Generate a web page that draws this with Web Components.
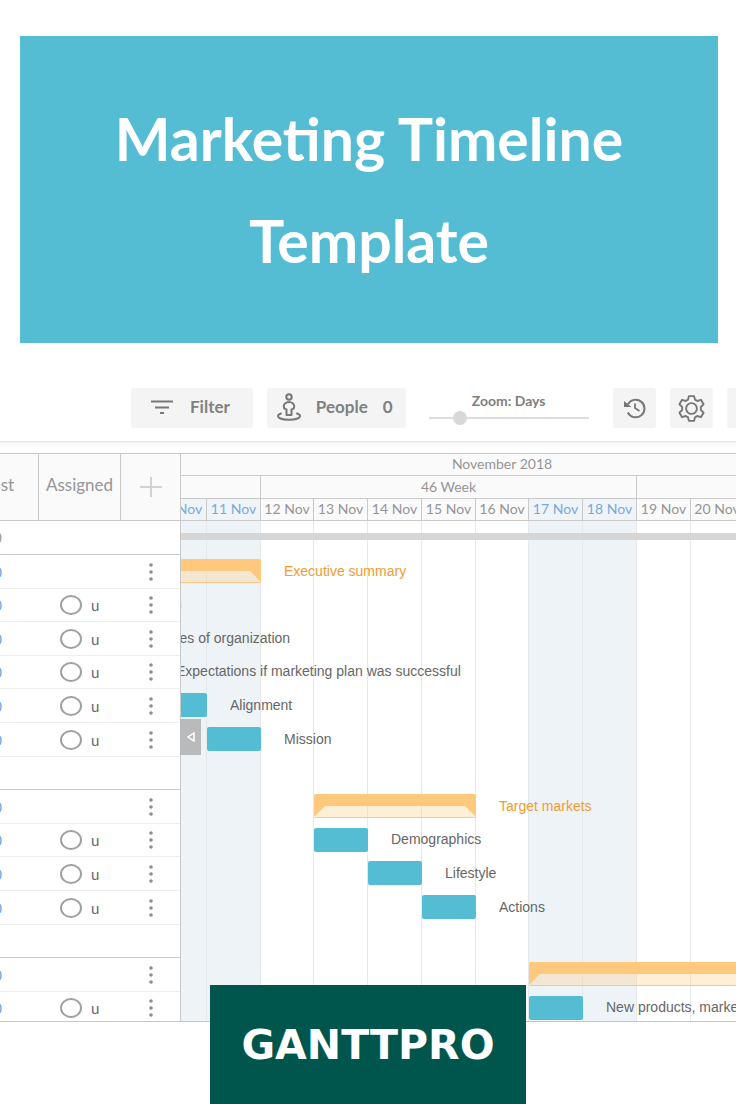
<!DOCTYPE html>
<html lang="en">
<head>
<meta charset="utf-8">
<meta name="viewport" content="width=device-width, initial-scale=1">
<title>Marketing Timeline Template</title>
<style>
    body {
        margin: 0;
        background: #fff;
        color: #858585;
        font-family: Lato, "Liberation Sans", sans-serif;
        overflow-x: hidden;
    }
    main {
        display: flex;
        flex-direction: column;
    }
</style>
</head>
<body>
<main>
    <title-banner>Marketing Timeline Template</title-banner>
    <tool-bar>
        <tool-button label="Filter" icon="filter"></tool-button>
        <tool-button label="People" icon="people" count="0"></tool-button>
        <zoom-slider></zoom-slider>
        <tool-button icon="history"></tool-button>
        <tool-button icon="settings"></tool-button>
        <tool-button></tool-button>
    </tool-bar>
    <gantt-project>
        <task-table slot="table"></task-table>
        <gantt-chart slot="chart"></gantt-chart>
    </gantt-project>
    <brand-badge>GANTTPRO</brand-badge>
</main>

<script>
function attach(el, html) {
    const root = el.attachShadow({mode: 'open'});
    const template = document.createElement('template');
    template.innerHTML = html;
    root.appendChild(template.content.cloneNode(true));
    return root;
}

class TitleBanner extends HTMLElement {
    constructor() {
        super();
        attach(this, `
            <style>
                :host {
                    display: block;
                    margin: 36px 18px 0 20px;
                    padding: 52px 80px 51px;
                    background: #54bdd4;
                    color: #fff;
                }
                h1 {
                    margin: 0;
                    font-size: 59px;
                    line-height: 102px;
                    font-weight: 700;
                    text-align: center;
                }
            </style>
            <h1><slot></slot></h1>`);
    }
}

class ToolBar extends HTMLElement {
    constructor() {
        super();
        attach(this, `
            <style>
                :host {
                    display: flex;
                    gap: 14px;
                    padding: 45px 0 13px 131px;
                    overflow: hidden;
                    border-bottom: 1px solid #e4e4e4;
                }
            </style>
            <slot></slot>`);
    }
}

const ICONS = {
    filter: `<svg width="22" height="14" viewBox="0 0 22 14" fill="none" stroke="#777" stroke-width="2">
        <path d="M0 1.5h22M4 7.5h14M9 13h4"/></svg>`,
    people: `<svg width="24" height="28" viewBox="0 0 24 28" fill="none" stroke="#777" stroke-width="2" stroke-linecap="round" stroke-linejoin="round">
        <circle cx="12" cy="4" r="2.7"/>
        <path d="M9.500 22v-5.500c-2.200-.3-2.700-1.500-2.700-3 0-2.500 2.200-4.500 5.200-4.500s5.200 2 5.200 4.500c0 1.500-.5 2.700-2.700 3V22z"/>
        <path d="M4 20.500c-1.800.6-3 1.500-3 2.500 0 2.200 5 3.700 11 3.700s11-1.500 11-3.700c0-1-1.200-1.900-3-2.500"/></svg>`,
    history: `<svg width="23" height="22" viewBox="0 0 23 22" fill="none" stroke="#777" stroke-width="2">
        <path d="M5 7.200A8.800 8.800 0 1 1 4.800 15.500"/>
        <path d="M1 4l7.500 6H1z" fill="#777" stroke="none"/>
        <path d="M12 6.500V11l4.500 3" stroke-width="1.800"/></svg>`,
    settings: `<svg width="27" height="27" viewBox="1 1 24 24" fill="none" stroke="#777" stroke-width="1.700" stroke-linejoin="round">
        <path d="M10.700 2h4.600l.8 3.200 2 1.100 3.300-1 2.300 4-2.400 2.400v2.600l2.400 2.400-2.300 4-3.300-1-2 1.100-.8 3.200h-4.600l-.8-3.200-2-1.100-3.300 1-2.300-4 2.400-2.400v-2.600L2.300 9.300l2.300-4 3.300 1 2-1.100z"/>
        <circle cx="13" cy="13" r="4.800"/></svg>`
};

class ToolButton extends HTMLElement {
    constructor() {
        super();
        this.root = attach(this, `
            <style>
                :host {
                    display: block;
                    flex: none;
                }
                button {
                    display: flex;
                    align-items: center;
                    justify-content: center;
                    min-width: 43px;
                    height: 40px;
                    padding: 0 8px;
                    border: 0;
                    border-radius: 3px;
                    background: #f4f4f4;
                    color: #808080;
                    font: 700 17px/20px Lato, sans-serif;
                }
                button.wide {
                    gap: 17px;
                    padding: 0 23px 2px 20px;
                }
                button.counted {
                    gap: 15px;
                    padding: 0 13px 2px 10px;
                }
            </style>
            <button type="button"></button>`);
    }

    connectedCallback() {
        const button = this.root.querySelector('button');
        const label = this.getAttribute('label');
        const icon = this.getAttribute('icon');
        const count = this.getAttribute('count');
        let html = ICONS[icon] || '';
        if (label) {
            html += `<span>${label}</span>`;
            button.className = 'wide';
        } else {
            button.setAttribute('aria-label', icon || 'more');
        }
        if (count !== null) {
            html += `<span>${count}</span>`;
            button.className = 'counted';
        }
        button.innerHTML = html;
    }
}

class ZoomSlider extends HTMLElement {
    constructor() {
        super();
        attach(this, `
            <style>
                :host {
                    display: flex;
                    flex: none;
                    flex-direction: column;
                    align-items: center;
                    width: 160px;
                    margin: 4px 10px 0 9px;
                }
                label {
                    color: #808080;
                    font-size: 14px;
                    line-height: 18px;
                    font-weight: 700;
                }
                input {
                    -webkit-appearance: none;
                    appearance: none;
                    width: 160px;
                    height: 16px;
                    margin: 0;
                    background: linear-gradient(#dcdcdc, #dcdcdc) center / 100% 2px no-repeat;
                }
                input::-webkit-slider-thumb {
                    -webkit-appearance: none;
                    width: 14px;
                    height: 14px;
                    border-radius: 50%;
                    background: #d8d8d8;
                }
            </style>
            <label for="zoom">Zoom: Days</label>
            <input id="zoom" type="range" min="0" max="100" value="17">`);
    }
}

class GanttProject extends HTMLElement {
    constructor() {
        super();
        attach(this, `
            <style>
                :host {
                    display: grid;
                    grid-template-columns: 180px minmax(0, 1fr);
                    position: relative;
                    height: 568px;
                    padding-top: 11px;
                    overflow: hidden;
                    background: linear-gradient(#f5f5f5, #fff 6px);
                    border-bottom: 1px solid #c4c8cb;
                }
                ::slotted(*) {
                    border-top: 1px solid #c9c9c9;
                }
                /* hides the table to the left of the chart */
                .collapse {
                    position: absolute;
                    left: 180px;
                    top: 277px;
                    width: 21px;
                    height: 36px;
                    padding: 0;
                    border: 0;
                    background: #b8babb;
                }
                svg { display: block; margin: 0 auto; }
            </style>
            <slot name="table"></slot>
            <slot name="chart"></slot>
            <button class="collapse" type="button" aria-label="Collapse table">
                <svg width="8" height="10" viewBox="0 0 8 10" fill="none" stroke="#fff" stroke-width="1.500"><path d="M7 1v8L1 5z"/></svg>
            </button>`);
    }
}

// g = group row, t = task row, e = empty row
const ROWS = ['g', 't', 't', 't', 't', 't', 'e', 'g', 't', 't', 't', 'e', 'g', 't'];

class TaskTable extends HTMLElement {
    constructor() {
        super();
        const menu = `<button type="button" aria-label="Task menu">
            <svg width="4" height="18" viewBox="0 0 4 18" fill="#8c8c8c"><circle cx="2" cy="2" r="1.800"/><circle cx="2" cy="9" r="1.800"/><circle cx="2" cy="16" r="1.800"/></svg></button>`;
        const body = ROWS.map((kind, i) => {
            const last = ROWS[i + 1] === 'g' ? ' class="end"' : '';
            if (kind === 'e') return `<tr${last}><td></td><td></td><td></td></tr>`;
            const person = kind === 't' ? '<span class="person"><i></i>u</span>' : '';
            return `<tr${last}><td class="cost">0</td><td>${person}</td><td>${menu}</td></tr>`;
        }).join('');
        attach(this, `
            <style>
                :host {
                    display: flex;
                    justify-content: flex-end;
                    overflow: hidden;
                }
                table {
                    flex: none;
                    width: 224px;
                    table-layout: fixed;
                    border-collapse: separate;
                    border-spacing: 0;
                }
                th, td {
                    box-sizing: border-box;
                    padding: 0;
                    text-align: center;
                }
                th {
                    height: 67px;
                    padding-bottom: 4px;
                    background: #fafafa;
                    border-right: 1px solid #c9c9c9;
                    border-bottom: 1px solid #c9c9c9;
                    color: #959595;
                    font-size: 17px;
                    line-height: 20px;
                    font-weight: 400;
                }
                th:last-child {
                    padding-bottom: 0;
                    border-right: 0;
                }
                td {
                    height: 34px;
                    border-bottom: 1px solid #efefef;
                    font-size: 15px;
                    line-height: 20px;
                }
                tbody tr:nth-child(5n+3) td, tbody tr:nth-child(5n) td { height: 33px; }
                .end td { border-bottom-color: #ccc; }
                .cost { color: #6fa8dc; }
                .root { color: #999; font-style: italic; }
                .person {
                    display: flex;
                    align-items: center;
                    gap: 9px;
                    padding-left: 21px;
                    color: #666;
                }
                .person i {
                    box-sizing: border-box;
                    width: 22px;
                    height: 20px;
                    border: 2px solid #a0a0a0;
                    border-radius: 50%;
                }
                button {
                    display: block;
                    margin: 0 auto;
                    padding: 0;
                    border: 0;
                    background: none;
                }
                svg { display: block; }
            </style>
            <table>
                <colgroup><col style="width: 83px"><col style="width: 82px"><col style="width: 59px"></colgroup>
                <thead><tr>
                    <th>Cost</th><th>Assigned</th>
                    <th><button type="button" aria-label="Add column">
                        <svg width="22" height="20" viewBox="0 0 22 20" stroke="#d2d2d2" stroke-width="2"><path d="M0 10h22M11 0v20"/></svg>
                    </button></th>
                </tr></thead>
                <tbody>
                    <tr class="end"><td class="root">0</td><td></td><td></td></tr>
                    ${body}
                </tbody>
            </table>`);
    }
}

// first day drawn on the grid; the ones before the 10th are scrolled out of view
const FIRST_DAY = 7;
const LAST_DAY = 21;
const WEEKENDS = [10, 11, 17, 18];

// row: line of the grid, from/to: days of the bar (to is not included)
const TASKS = [
    {row: 2, from: 7, to: 12, name: 'Executive summary', group: true},
    {row: 3, from: 7, to: 8, name: 'Business situation'},
    {row: 4, from: 8, to: 9, name: 'Capabilities of organization'},
    {row: 5, from: 9, to: 10, name: 'Expectations if marketing plan was successful'},
    {row: 6, from: 10, to: 11, name: 'Alignment'},
    {row: 7, from: 11, to: 12, name: 'Mission'},
    {row: 9, from: 13, to: 16, name: 'Target markets', group: true},
    {row: 10, from: 13, to: 14, name: 'Demographics'},
    {row: 11, from: 14, to: 15, name: 'Lifestyle'},
    {row: 12, from: 15, to: 16, name: 'Actions'},
    {row: 14, from: 17, to: 22, name: '', group: true},
    {row: 15, from: 17, to: 18, name: 'New products, markets and services'}
];

const column = day => day - FIRST_DAY + 1;

class GanttBar extends HTMLElement {
    constructor() {
        super();
        attach(this, `
            <style>
                :host {
                    display: block;
                    align-self: center;
                    box-sizing: border-box;
                    height: 24px;
                    margin-bottom: 2px;
                    border-radius: 2px;
                    background: #54bdd4;
                }
                :host([group]) {
                    display: flex;
                    align-items: flex-end;
                    padding-bottom: 1px;
                    background: linear-gradient(#fec97c, #fec97c) top / 100% 12px no-repeat,
                        linear-gradient(#fec97c, #fec97c) bottom / 100% 1px no-repeat,
                        rgba(254, 201, 124, .3);
                }
                /* the two slanted ends of a group bar */
                .left, .right {
                    display: none;
                    border-top: 12px solid #fec97c;
                }
                .left { border-right: 12px solid transparent; }
                .right { border-left: 12px solid transparent; margin-left: auto; }
                :host([group]) .left, :host([group]) .right { display: block; }
            </style>
            <span class="left"></span><span class="right"></span>`);
    }
}

class GanttChart extends HTMLElement {
    constructor() {
        super();
        let days = '';
        let stripes = '';
        for (let d = FIRST_DAY; d <= LAST_DAY; d++) {
            const weekend = WEEKENDS.includes(d) ? ' weekend' : '';
            days += `<div class="day${weekend}" style="grid-column: ${column(d)}">${d} Nov</div>`;
            stripes += `<div class="stripe${weekend}" style="grid-column: ${column(d)}"></div>`;
        }
        const bars = TASKS.map(t => `
            <gantt-bar ${t.group ? 'group' : ''} style="grid-area: ${t.row} / ${column(t.from)} / auto / ${column(t.to)}"></gantt-bar>
            <span class="name${t.group ? ' group' : ''}" style="grid-area: ${t.row} / ${column(t.to)}">${t.name}</span>`).join('');
        attach(this, `
            <style>
                :host {
                    display: flex;
                    flex-direction: column;
                    overflow: hidden;
                    border-left: 1px solid #c9c9c9;
                }
                .scale, .body {
                    display: grid;
                    flex: none;
                    width: 1075px;
                    margin-left: -189px;
                    grid-template-columns: repeat(5, 54px 53px 54px 54px);
                }
                .scale {
                    grid-template-rows: 22px 23px 22px;
                    background: #fafafa;
                    color: #959595;
                    font-size: 14px;
                    line-height: 20px;
                    text-align: center;
                }
                .scale div {
                    box-sizing: border-box;
                    border-right: 1px solid #c9c9c9;
                    border-bottom: 1px solid #c9c9c9;
                    white-space: nowrap;
                }
                .month { grid-area: 1 / 1 / auto / 20; }
                .week { grid-row: 2; line-height: 22px; }
                .day { grid-row: 3; }
                .day.weekend { color: #77aadb; background: #eff4f9; }
                .body {
                    grid-template-rows: repeat(3, 34px 34px 33px 34px 33px);
                }
                .stripe {
                    grid-row: 1 / -1;
                    border-right: 1px solid #e6e8ea;
                }
                .stripe.weekend { background: #eef3f8; }
                .total {
                    grid-area: 1 / 1 / auto / -1;
                    align-self: center;
                    height: 7px;
                    margin-bottom: 4px;
                    background: #d6d6d6;
                }
                .name {
                    align-self: center;
                    width: 0;
                    margin-bottom: 3px;
                    padding-left: 23px;
                    color: #666;
                    font: 14px/20px "Liberation Sans", sans-serif;
                    white-space: nowrap;
                }
                .name.group { color: #f29b30; }
            </style>
            <div class="scale">
                <div class="month">November 2018</div>
                <div class="week" style="grid-column: 1 / ${column(12)}"></div>
                <div class="week" style="grid-column: ${column(12)} / ${column(19)}">46 Week</div>
                <div class="week" style="grid-column: ${column(19)} / -1"></div>
                ${days}
            </div>
            <div class="body">
                ${stripes}
                <div class="total"></div>
                ${bars}
            </div>`);
    }
}

class BrandBadge extends HTMLElement {
    constructor() {
        super();
        attach(this, `
            <style>
                :host {
                    display: flex;
                    align-items: center;
                    justify-content: center;
                    align-self: center;
                    position: relative;
                    width: 316px;
                    height: 119px;
                    margin-top: -37px;
                    background: #00564c;
                    color: #fff;
                    font: 700 41px/48px "DejaVu Sans", sans-serif;
                }
            </style>
            <slot></slot>`);
    }
}

window.customElements.define('title-banner', TitleBanner);
window.customElements.define('tool-bar', ToolBar);
window.customElements.define('tool-button', ToolButton);
window.customElements.define('zoom-slider', ZoomSlider);
window.customElements.define('gantt-project', GanttProject);
window.customElements.define('task-table', TaskTable);
window.customElements.define('gantt-bar', GanttBar);
window.customElements.define('gantt-chart', GanttChart);
window.customElements.define('brand-badge', BrandBadge);
</script>
</body>
</html>
